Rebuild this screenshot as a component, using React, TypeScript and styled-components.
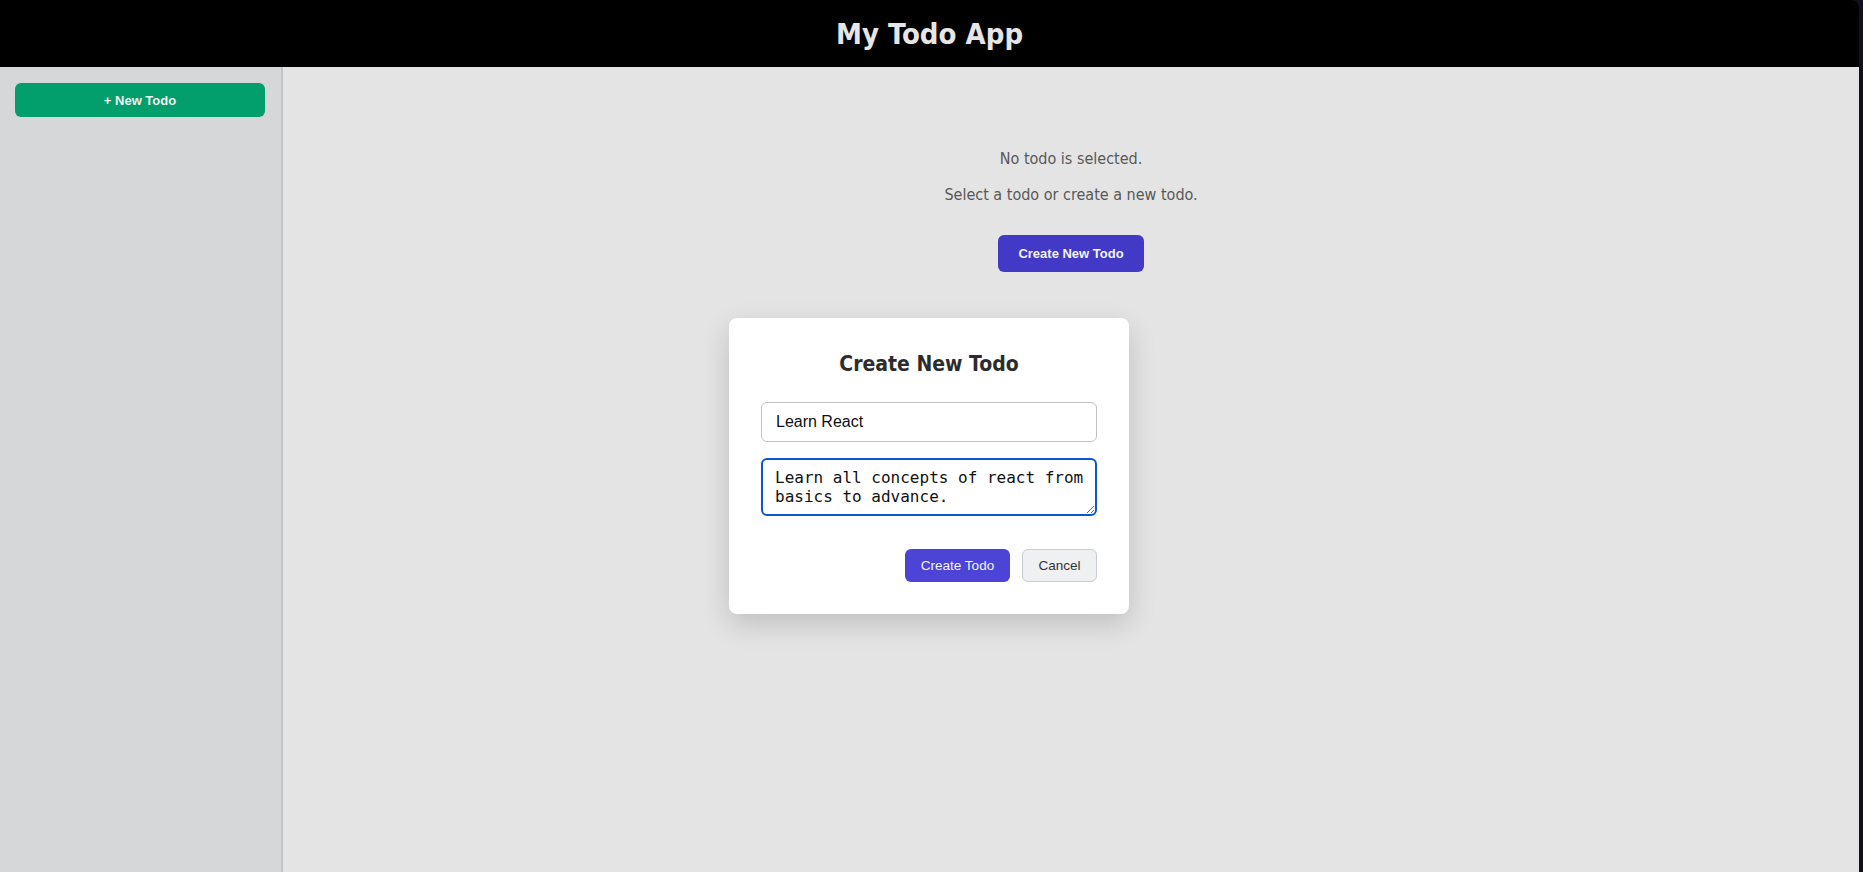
import * as React from 'react';
import styled, { createGlobalStyle } from 'styled-components';

const GlobalStyle = createGlobalStyle`
  html, body {
    margin: 0;
    padding: 0;
    height: 100%;
    background: #0e121c;
  }
  #root {
    height: 100%;
  }
  * {
    box-sizing: border-box;
  }
`;

const uiFont = `"DejaVu Sans Condensed", "DejaVu Sans", Verdana, sans-serif`;
const btnFont = `"Liberation Sans", Arial, sans-serif`;

const Shell = styled.div`
  position: relative;
  width: calc(100% - 4px);
  height: 100%;
  display: flex;
  flex-direction: column;
  border-top-right-radius: 8px;
  overflow: hidden;
  font-family: ${uiFont};
`;

const Header = styled.header`
  height: 67px;
  flex-shrink: 0;
  background: #000;
  display: flex;
  align-items: center;
  justify-content: center;
`;

const Title = styled.h1`
  margin: 0;
  color: #e6e6e6;
  font-size: 29px;
  font-weight: bold;
  line-height: 1;
  padding-top: 2px;
`;

const Body = styled.div`
  flex: 1;
  display: flex;
  min-height: 0;
`;

const Sidebar = styled.aside`
  width: 283px;
  flex-shrink: 0;
  background: #d6d7d9;
  border-right: 2px solid #c3c4c6;
  padding: 16px 16px 0 15px;
`;

const NewTodoButton = styled.button`
  width: 250px;
  height: 34px;
  border: none;
  border-radius: 6px;
  background: #029e6c;
  color: #eef1ef;
  font-family: ${btnFont};
  font-size: 13px;
  font-weight: bold;
  cursor: pointer;
`;

const Main = styled.main`
  flex: 1;
  background: #e4e4e4;
  display: flex;
  flex-direction: column;
  align-items: center;
  padding-top: 82px;
`;

const Message = styled.p<{ $gap: number }>`
  margin: 0 0 ${(p) => p.$gap}px;
  color: #585858;
  font-size: 16px;
  line-height: 19px;
`;

const PrimaryButton = styled.button<{ $bold?: boolean }>`
  border: none;
  border-radius: 6px;
  background: ${(p) => (p.$bold ? '#4239c7' : '#4b44d6')};
  color: #f4f4f8;
  font-family: ${btnFont};
  font-size: ${(p) => (p.$bold ? '13px' : '13.5px')};
  font-weight: ${(p) => (p.$bold ? 'bold' : 'normal')};
  padding: 0 12px;
  cursor: pointer;
`;

const CreateNewButton = styled(PrimaryButton)`
  width: 146px;
  height: 37px;
`;

const Overlay = styled.div`
  position: absolute;
  inset: 0;
  display: flex;
  justify-content: center;
  align-items: flex-start;
  padding: 318px 1px 0 0;
  pointer-events: none;
`;

const Modal = styled.div`
  width: 400px;
  background: #fff;
  border-radius: 8px;
  padding: 32px;
  box-shadow: 0 10px 28px rgba(0, 0, 0, 0.16);
  pointer-events: auto;
`;

const ModalTitle = styled.h2`
  margin: 0 0 25px;
  padding-top: 1px;
  text-align: center;
  color: #2c2c2c;
  font-size: 21px;
  font-weight: bold;
  line-height: 26px;
`;

const TextInput = styled.input`
  display: block;
  width: 100%;
  height: 40px;
  margin: 0 0 16px;
  padding: 0 14px;
  border: 1px solid #c2c2c2;
  border-radius: 6px;
  font-family: ${btnFont};
  font-size: 16px;
  color: #111;
  outline: none;
`;

const TextArea = styled.textarea`
  display: block;
  width: 100%;
  height: 58px;
  margin: 0;
  padding: 8px 9px 6px 12px;
  border: 2px solid #0b57d0;
  border-radius: 6px;
  font-family: "DejaVu Sans Mono", "Liberation Mono", monospace;
  font-size: 16px;
  color: #111;
  outline: none;
`;

const Actions = styled.div`
  display: flex;
  justify-content: flex-end;
  gap: 12px;
  margin-top: 33px;
`;

const SubmitButton = styled(PrimaryButton)`
  width: 105px;
  height: 33px;
`;

const CancelButton = styled.button`
  width: 75px;
  height: 33px;
  border: 1px solid #c9ccd1;
  border-radius: 6px;
  background: #eff0f2;
  color: #333;
  font-family: ${btnFont};
  font-size: 13.5px;
  cursor: pointer;
`;

export default function App() {
  const [title, setTitle] = React.useState('Learn React');
  const [desc, setDesc] = React.useState('Learn all concepts of react from basics to advance.');

  return (
    <>
      <GlobalStyle />
      <Shell>
        <Header>
          <Title>My Todo App</Title>
        </Header>
        <Body>
          <Sidebar>
            <NewTodoButton>+ New Todo</NewTodoButton>
          </Sidebar>
          <Main>
            <Message $gap={17}>No todo is selected.</Message>
            <Message $gap={31}>Select a todo or create a new todo.</Message>
            <CreateNewButton $bold>Create New Todo</CreateNewButton>
          </Main>
        </Body>
        <Overlay>
          <Modal>
            <ModalTitle>Create New Todo</ModalTitle>
            <TextInput value={title} onChange={(e) => setTitle(e.target.value)} />
            <TextArea value={desc} onChange={(e) => setDesc(e.target.value)} />
            <Actions>
              <SubmitButton>Create Todo</SubmitButton>
              <CancelButton>Cancel</CancelButton>
            </Actions>
          </Modal>
        </Overlay>
      </Shell>
    </>
  );
}
